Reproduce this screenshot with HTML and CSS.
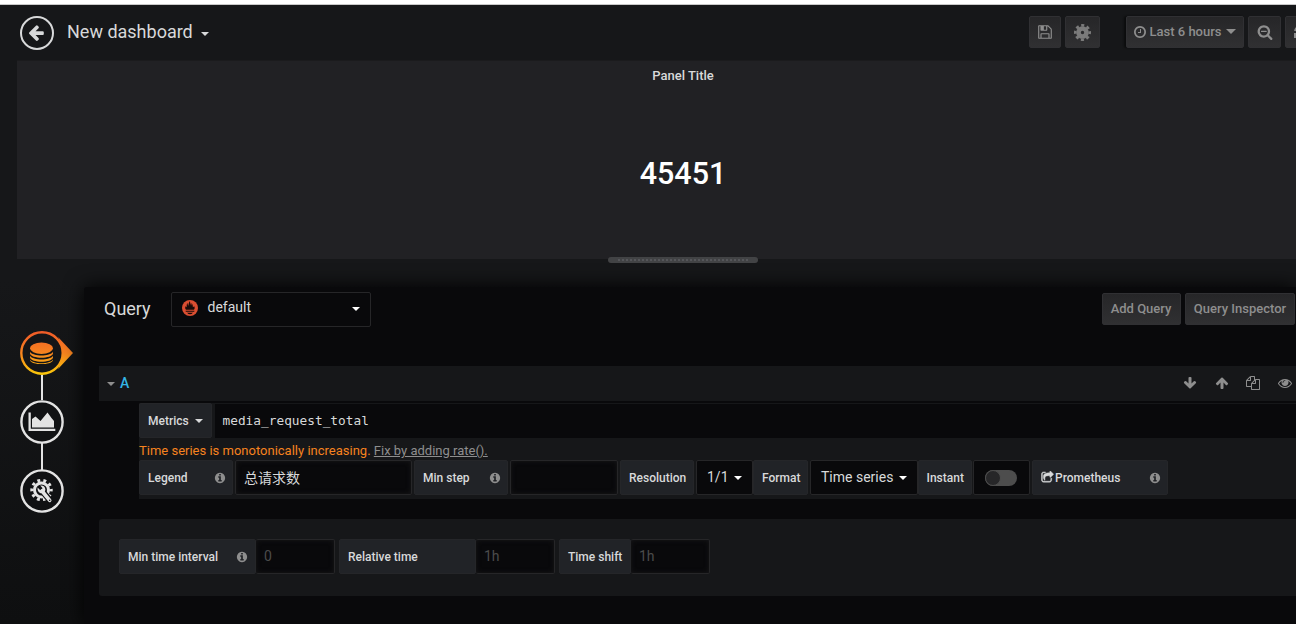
FILE: index.html
```html
<!DOCTYPE html>
<html lang="en">
<head>
<meta charset="utf-8">
<title>New dashboard</title>
<link rel="stylesheet" href="styles.css">
</head>
<body>
<svg class="defs" width="0" height="0">
  <symbol id="info" viewBox="0 0 1792 1792"><path d="M1152 1376v-160q0-14-9-23t-23-9h-96v-512q0-14-9-23t-23-9h-320q-14 0-23 9t-9 23v160q0 14 9 23t23 9h96v320h-96q-14 0-23 9t-9 23v160q0 14 9 23t23 9h448q14 0 23-9t9-23zm-128-896v-160q0-14-9-23t-23-9h-192q-14 0-23 9t-9 23v160q0 14 9 23t23 9h192q14 0 23-9t9-23zm640 416q0 209-103 385.5t-279.5 279.5-385.5 103-385.5-103-279.5-279.5-103-385.5 103-385.5 279.5-279.5 385.5-103 385.5 103 279.5 279.5 103 385.5z"/></symbol>
</svg>
<header class="navbar">
  <button class="back"><svg width="18" height="18" viewBox="0 0 1792 1792"><path d="M1664 896v128q0 53-32.5 90.5t-84.5 37.5h-704l293 294q38 36 38 90t-38 90l-75 76q-37 37-90 37-52 0-91-37l-651-652q-37-37-37-90 0-52 37-91l651-650q38-38 91-38 52 0 90 38l75 74q38 38 38 91t-38 91l-293 293h704q52 0 84.5 37.5t32.5 90.5z" transform="translate(-90 -50)"/></svg></button>
  <div class="page-title">New dashboard<span class="caret"></span></div>
  <div class="nav-buttons">
    <button class="btn save"><svg width="16" height="16" viewBox="0 0 1792 1792"><path d="M512 1536h768v-384h-768v384zm896 0h128v-896q0-14-10-38.5t-20-34.5l-281-281q-10-10-34-20t-39-10v416q0 40-28 68t-68 28h-576q-40 0-68-28t-28-68v-416h-128v1280h128v-416q0-40 28-68t68-28h832q40 0 68 28t28 68v416zm-384-928v-320q0-13-9.5-22.5t-22.5-9.5h-192q-13 0-22.5 9.5t-9.5 22.5v320q0 13 9.5 22.5t22.5 9.5h192q13 0 22.5-9.5t9.5-22.5zm640 32v928q0 40-28 68t-68 28h-1344q-40 0-68-28t-28-68v-1344q0-40 28-68t68-28h928q40 0 88 20t76 48l280 280q28 28 48 76t20 88z"/></svg></button>
    <button class="btn settings"><svg width="17" height="17" viewBox="-8.5 -8.5 17 17"><circle r="4" fill="none" stroke="currentColor" stroke-width="4.6"/><circle r="7.2" fill="none" stroke="currentColor" stroke-width="2.6" stroke-dasharray="3.1 2.555" stroke-dashoffset="1.55"/></svg></button>
    <button class="btn time"><svg width="14" height="14" viewBox="0 0 1792 1792"><path d="M1024 544v448q0 14-9 23t-23 9h-320q-14 0-23-9t-9-23v-64q0-14 9-23t23-9h224v-352q0-14 9-23t23-9h64q14 0 23 9t9 23zm416 352q0-148-73-273t-198-198-273-73-273 73-198 198-73 273 73 273 198 198 273 73 273-73 198-198 73-273zm224 0q0 209-103 385.5t-279.5 279.5-385.5 103-385.5-103-279.5-279.5-103-385.5 103-385.5 279.5-279.5 385.5-103 385.5 103 279.5 279.5 103 385.5z"/></svg><span>Last 6 hours</span><i class="caret"></i></button>
    <button class="btn zoom-out"><svg width="16" height="16" viewBox="0 0 1792 1792"><path d="M1088 800v64q0 13-9.5 22.5t-22.5 9.5h-576q-13 0-22.5-9.5t-9.5-22.5v-64q0-13 9.5-22.5t22.5-9.5h576q13 0 22.5 9.5t9.5 22.5zm128 32q0-185-131.5-316.5t-316.5-131.5-316.5 131.5-131.5 316.5 131.5 316.5 316.5 131.5 316.5-131.5 131.5-316.5zm512 832q0 53-37.5 90.5t-90.5 37.5q-54 0-90-38l-343-342q-179 124-399 124-143 0-273.5-55.5t-225-150-150-225-55.5-273.5 55.5-273.5 150-225 225-150 273.5-55.5 273.5 55.5 225 150 150 225 55.5 273.5q0 220-124 399l343 343q37 37 37 90z"/></svg></button>
    <button class="btn refresh"><svg width="14" height="14" viewBox="0 0 14 14" fill="none" stroke="currentColor" stroke-width="2"><path d="M1 6A6 6 0 0 1 12 4M13 1v4H9M13 8A6 6 0 0 1 2 10M1 13V9h4"/></svg></button>
  </div>
</header>

<section class="panel">
  <h2 class="panel-title">Panel Title</h2>
  <div class="stat">45451</div>
  <div class="resizer"><i></i></div>
</section>

<main class="editor">
  <nav class="tabs">
    <svg width="56" height="184" viewBox="0 0 56 184">
      <defs><linearGradient id="fire" gradientUnits="userSpaceOnUse" x1="0" y1="0" x2="0" y2="44"><stop offset="0" stop-color="#f05a28"/><stop offset=".5" stop-color="#f7831f"/><stop offset="1" stop-color="#fbca0a"/></linearGradient></defs>
      <path d="M22 44v25M22 112v27" stroke="#e3e3e3" stroke-width="2"/>
      <path d="M38 6L53 22 38 38Q46 22 38 6z" fill="url(#fire)"/>
      <circle cx="22" cy="22" r="20.7" fill="#141517" stroke="url(#fire)" stroke-width="2.4"/>
      <g fill="url(#fire)">
        <ellipse cx="21.5" cy="17.2" rx="11.5" ry="5.7"/>
        <path d="M10 20.800c3 5 20 5 23 0v1.700c-1 5.600-22 5.600-23 0zM10 24.800c3 5 20 5 23 0v1.700c-1 5.600-22 5.600-23 0zM10 28.600c3 5 20 5 23 0v0.600c-2 5.200-21 5.200-23 0z"/>
      </g>
      <g fill="#e3e3e3">
        <circle cx="22" cy="91" r="20.6" fill="#111214" stroke="#e3e3e3" stroke-width="2.4"/>
        <path d="M8.5 81.5h2.3v16.3h24.5v2.2H8.5z"/>
        <path d="M12 96.5V88l3.500-2.500 5 4.500 7-8.500 4 5.500 2.500 3v6.500z"/>
        <circle cx="22" cy="160" r="20.6" fill="#101113" stroke="#e3e3e3" stroke-width="2.4"/>
        <circle cx="21.5" cy="159" r="7" fill="none" stroke="#e3e3e3" stroke-width="3"/>
        <circle cx="21.5" cy="159" r="9.7" fill="none" stroke="#e3e3e3" stroke-width="3" stroke-dasharray="2.9 3.195" stroke-dashoffset="1.45"/>
        <path d="M23 161L30 169.500" stroke="#101113" stroke-width="6" stroke-linecap="round"/>
        <path d="M22 160L29.700 169.300" stroke="#e3e3e3" stroke-width="3.6" stroke-linecap="round"/>
        <path d="M17.600 156.500L20.300 159.200 22.600 157.200 20.200 154.500Q24.800 154 25.400 158.500 25 162.500 20.500 162.300 17 160.500 17.600 156.500z"/>
        <circle cx="29.7" cy="169.2" r=".8" fill="#101113"/>
      </g>
    </svg>
  </nav>

  <div class="queries">
    <div class="toolbar">
      <h3>Query</h3>
      <div class="datasource">
        <svg width="16" height="16" viewBox="0 0 16 16"><circle cx="8" cy="8" r="8" fill="#da4e31"/><path d="M4 9.800C2.800 8.500 3.200 7.500 3.500 6.300l1.100 1C4.800 5.500 4.600 4.500 5.300 3c.5 1 .4 2 1 2.800C6.800 4.200 6.600 2.500 8 1c-.2 2 1 2.800 1 4.800.5-.8.5-1.800.5-2.800 1.200 1.200 1.300 2.700 1.400 4.300l1.300-1C12.700 7.500 13 8.500 12 9.800zM3.700 10.700h8.600v1.100H3.700zM5 12.700h6Q8 15.700 5 12.700z" fill="#180b09"/></svg>
        <span>default</span><i class="caret"></i>
      </div>
      <button class="btn add-query">Add Query</button>
      <button class="btn inspector">Query Inspector</button>
    </div>

    <div class="row-head">
      <i class="caret"></i><b>A</b>
      <div class="row-actions">
        <svg width="14" height="14" viewBox="0 0 1792 1792"><path d="M1675 832q0 53-37 90l-651 652q-39 37-91 37-53 0-90-37l-651-652q-38-36-38-90 0-53 38-91l74-75q39-37 91-37 53 0 90 37l294 294v-704q0-52 38-90t90-38h128q52 0 90 38t38 90v704l294-294q37-37 90-37 52 0 91 37l75 75q37 39 37 91z"/></svg>
        <svg width="14" height="14" viewBox="0 0 1792 1792"><path d="M1675 971q0 51-37 90l-75 75q-38 38-91 38-54 0-90-38l-294-293v704q0 52-37.500 84.500t-90.500 32.500h-128q-53 0-90.500-32.500t-37.500-84.500v-704l-294 293q-36 38-90 38t-90-38l-75-75q-38-38-38-90 0-53 38-91l651-651q35-37 90-37 54 0 91 37l651 651q37 39 37 91z"/></svg>
        <svg width="14" height="14" viewBox="0 0 1792 1792"><path d="M1696 384q40 0 68 28t28 68v1216q0 40-28 68t-68 28h-960q-40 0-68-28t-28-68v-288h-544q-40 0-68-28t-28-68v-672q0-40 20-88t48-76l408-408q28-28 76-48t88-20h416q40 0 68 28t28 68v328q68-40 128-40h416zm-544 213l-299 299h299v-299zm-640-384l-299 299h299v-299zm196 647l316-316v-416h-384v416q0 40-28 68t-68 28h-416v640h512v-256q0-40 20-88t48-76zm956 804v-1152h-384v416q0 40-28 68t-68 28h-416v640h896z"/></svg>
        <svg width="14" height="14" viewBox="0 0 1792 1792"><path d="M1664 960q-152-236-381-353 61 104 61 225 0 185-131.500 316.500t-316.500 131.500-316.500-131.500-131.500-316.500q0-121 61-225-229 117-381 353 133 205 333.500 326.500t434.500 121.500 434.500-121.500 333.500-326.500zm-720-384q0-20-14-34t-34-14q-125 0-214.500 89.500t-89.500 214.500q0 20 14 34t34 14 34-14 14-34q0-86 61-147t147-61q20 0 34-14t14-34zm848 384q0 34-20 69-140 230-376.500 368.500t-499.500 138.500-499.500-139-376.500-368q-20-35-20-69t20-69q140-229 376.500-368t499.500-139 499.500 139 376.500 368q20 35 20 69z"/></svg>
      </div>
    </div>

    <div class="query-body">
      <div class="metric-line">
        <div class="label metrics">Metrics<i class="caret"></i></div>
        <div class="expression">media_request_total</div>
      </div>
      <div class="hint">Time series is monotonically increasing. <a>Fix by adding rate().</a></div>
      <div class="fields">
        <div class="label w-legend">Legend<svg class="info"><use href="#info"/></svg></div>
        <div class="field legend">总请求数</div>
        <div class="label w-legend">Min step<svg class="info"><use href="#info"/></svg></div>
        <div class="field step"></div>
        <div class="label resolution">Resolution</div>
        <div class="select ratio">1/1<i class="caret"></i></div>
        <div class="label format">Format</div>
        <div class="select series">Time series<i class="caret"></i></div>
        <div class="label instant">Instant</div>
        <div class="select toggle"><span class="track"><i></i></span></div>
        <div class="label prometheus"><svg width="13" height="13" viewBox="0 0 1792 1792"><path d="M1472 989v259q0 119-84.500 203.500t-203.500 84.500h-832q-119 0-203.500-84.500t-84.500-203.500v-832q0-119 84.500-203.500t203.500-84.500h255q13 0 22.500 9.500t9.500 22.500q0 27-26 32-77 26-133 60-10 4-16 4h-112q-66 0-113 47t-47 113v832q0 66 47 113t113 47h832q66 0 113-47t47-113v-214q0-19 18-29 28-13 54-37 16-16 35-8 21 9 21 29zm237-496l-384 384q-18 19-45 19-12 0-25-5-39-17-39-59v-192h-160q-323 0-438 131-119 137-74 473 3 23-20 34-8 2-12 2-16 0-26-13-10-14-21-31t-39.500-68.500-49.500-99.500-38.500-114-17.500-122q0-49 3.500-91t14-90 28-88 47-81.500 68.500-74 94.500-61.500 124.500-48.500 159.500-30.500 196.500-11h160v-192q0-42 39-59 13-5 25-5 26 0 45 19l384 384q19 19 19 45t-19 45z" stroke="currentColor" stroke-width="60"/></svg>Prometheus<svg class="info"><use href="#info"/></svg></div>
      </div>
    </div>

    <div class="options">
      <div class="label interval">Min time interval<svg class="info"><use href="#info"/></svg></div>
      <div class="field hinted">0</div>
      <div class="label relative">Relative time</div>
      <div class="field hinted">1h</div>
      <div class="label shift">Time shift</div>
      <div class="field hinted">1h</div>
    </div>
  </div>
</main>
</body>
</html>
```
FILE: styles.css
```css
* { box-sizing: border-box; }

body {
  margin: 0;
  width: 1296px;
  height: 624px;
  overflow: hidden;
  border-top: 4px solid #fff;
  background: linear-gradient(180deg, #161719 0, #161719 45%, #0e0f10 100%);
  color: #d8d9da;
  font: 13px/20px Roboto, "Noto Sans CJK SC", sans-serif;
}

svg { display: block; flex: none; fill: currentColor; }
.defs { position: absolute; }
button { font: inherit; }

.caret {
  flex: none;
  border: 4px solid transparent;
  border-top-color: currentColor;
  border-bottom: 0;
}

/* Top bar */
.navbar {
  display: flex;
  height: 56px;
  border-top: 1px solid #c9c9c9;
  padding-left: 20px;
}
.back {
  display: grid;
  place-items: center;
  width: 34px;
  height: 34px;
  margin-top: 11px;
  padding: 0;
  border: 2px solid #d8d9da;
  border-radius: 50%;
  background: none;
  color: #d8d9da;
}
.page-title {
  display: flex;
  align-items: center;
  gap: 8px;
  height: 32px;
  margin: 11px 0 0 13px;
  font-size: 18px;
}
.page-title .caret { margin-top: 4px; }
.nav-buttons {
  display: flex;
  flex: none;
  margin: 11px -14px 0 auto;
}
.btn {
  display: flex;
  flex: none;
  align-items: center;
  justify-content: center;
  height: 32px;
  padding: 0 1px 0 0;
  border: 1px solid #303033;
  border-radius: 2px;
  background: linear-gradient(180deg, #262628, #303032);
  color: #8e8e8e;
  font-weight: 500;
}
.save { width: 32px; margin-right: 4px; }
.settings { width: 35px; margin-right: 26px; padding: 0; color: #7b7b7b; }
.time { width: 118px; margin-right: 4px; gap: 2px; box-shadow: -2px 0 2px #0b0c0d; }
.time svg { margin-top: -1px; }
.time .caret { border-width: 5px 5px 0; margin: -2px 0 0 2px; }
.zoom-out { width: 33px; margin-right: 4px; padding: 0; }
.refresh { width: 25px; padding-left: 8px; }

/* Visualisation */
.panel {
  position: relative;
  height: 199px;
  margin-left: 17px;
  border-top: 1px solid #1b1b1d;
  background: #212124;
  text-align: center;
  padding: 5px 0 0 52px;
}
.panel-title { margin: 0; font-size: 13px; font-weight: 500; }
.stat { margin-top: 67px; color: #fff; font-size: 30.5px; line-height: 42px; font-weight: 500; }
.panel-title, .stat { width: 1228px; }
.resizer {
  position: absolute;
  top: 196px;
  left: 591px;
  width: 150px;
  height: 6px;
  padding: 2px 10px;
  border-radius: 3px;
  background: #424345;
}
.resizer i {
  display: block;
  height: 2px;
  background: repeating-linear-gradient(90deg, #55565a 0 2px, transparent 2px 4px);
}

/* Editor */
.editor { display: flex; height: 365px; padding-top: 28px; }
.tabs { flex: none; width: 84px; padding: 44px 0 0 20px; }
.queries {
  flex: 1;
  min-width: 0;
  height: 337px;
  padding: 5px 0 0 15px;
  border-radius: 3px 0 0;
  background: #09090b;
  box-shadow: 0 0 20px #000;
}
.toolbar { display: flex; align-items: flex-start; height: 74px; padding-left: 5px; }
.toolbar h3 { width: 67px; margin: 7px 0 0; font-size: 18px; font-weight: 400; }
.datasource {
  display: flex;
  align-items: center;
  width: 200px;
  height: 35px;
  padding: 0 10px 5px 10px;
  border: 1px solid #262628;
  border-radius: 2px;
  font-size: 14px;
}
.datasource svg { margin-top: 2px; }
.datasource span { margin-left: 9.5px; }
.datasource .caret { margin: 4px 0 0 auto; color: #fff; }
.add-query { width: 79px; margin: 1px 4px 0 auto; }
.inspector { width: 110px; margin: 1px 1px 0 0; padding: 0; }

.row-head {
  display: flex;
  align-items: center;
  height: 35px;
  padding: 0 4px 0 8px;
  background: #161719;
}
.row-head > .caret { color: #8e8e8e; }
.row-head b { margin: -1px 0 0 5px; color: #33b5e5; font-weight: 500; font-size: 14px; }
.row-actions { display: flex; gap: 17.7px; margin: -1px 0 0 auto; color: #8e8e8e; }

.query-body { height: 96px; margin: 2px 0 0 40px; background: #161719; }
.metric-line { display: flex; gap: 3px; }
.label {
  display: flex;
  flex: none;
  align-items: center;
  height: 35px;
  padding: 0 8px;
  border: 1px solid #252629;
  border-radius: 2px;
  background: #212327;
  font-size: 12px;
  font-weight: 500;
  white-space: nowrap;
}
.metrics { width: 73px; }
.metrics .caret { margin-left: 6.5px; }
.expression {
  flex: 1;
  margin-top: 1px;
  padding: 7px 7.5px 6px;
  background: #09090b;
  font-family: "DejaVu Sans Mono", monospace;
  font-size: 12.8px;
}
.hint { height: 22px; padding-top: 3px; color: #f7831f; line-height: 19px; }
.hint a { color: #8e8e8e; text-decoration: underline; }

.fields { display: flex; }
.info { width: 12px; height: 12px; margin: 0 -1px 0 auto; color: #8e8e8e; }
.field, .select {
  display: flex;
  flex: none;
  align-items: center;
  height: 35px;
  padding: 0 8px;
  border: 1px solid #262628;
  border-radius: 2px;
  background: #09090b;
  font-size: 14px;
}
.field { box-shadow: inset 0 0 5px #18181a; }
.select { padding: 0 10px 1px 10px; }
.select .caret { margin: 2px 0 0 auto; color: #fff; }
.w-legend { width: 94px; }
.w-legend .info { margin-right: -2px; }
.legend { width: 177px; margin: 0 2px; }
.step { width: 108px; margin: 0 2px; }
.resolution { width: 74px; margin-right: 2px; }
.ratio { width: 57px; }
.format { width: 55px; margin-right: 2px; }
.series { width: 108px; }
.instant { width: 54px; margin-right: 1px; padding-left: 7.5px; }
.toggle { width: 57px; margin-right: 2px; padding: 0 0 0 11px; }
.track {
  display: block;
  width: 32px;
  height: 16px;
  border-radius: 8px;
  background: #4d4d4d;
}
.track i {
  display: block;
  width: 16px;
  height: 16px;
  border: 1px solid #4d4d4d;
  border-radius: 50%;
  background: #262628;
}
.prometheus { width: 136px; gap: 1px; }
.prometheus .info { margin-right: -2px; }

.options {
  display: flex;
  height: 77px;
  margin-top: 20px;
  padding: 20px;
  border-radius: 3px 0 0 3px;
  background: #161719;
}
.hinted { width: 79px; margin-right: 4px; padding-bottom: 1px; border-left: 0; color: #4c4c4c; }
.interval, .relative { width: 137px; }
.shift { width: 72px; }
```
